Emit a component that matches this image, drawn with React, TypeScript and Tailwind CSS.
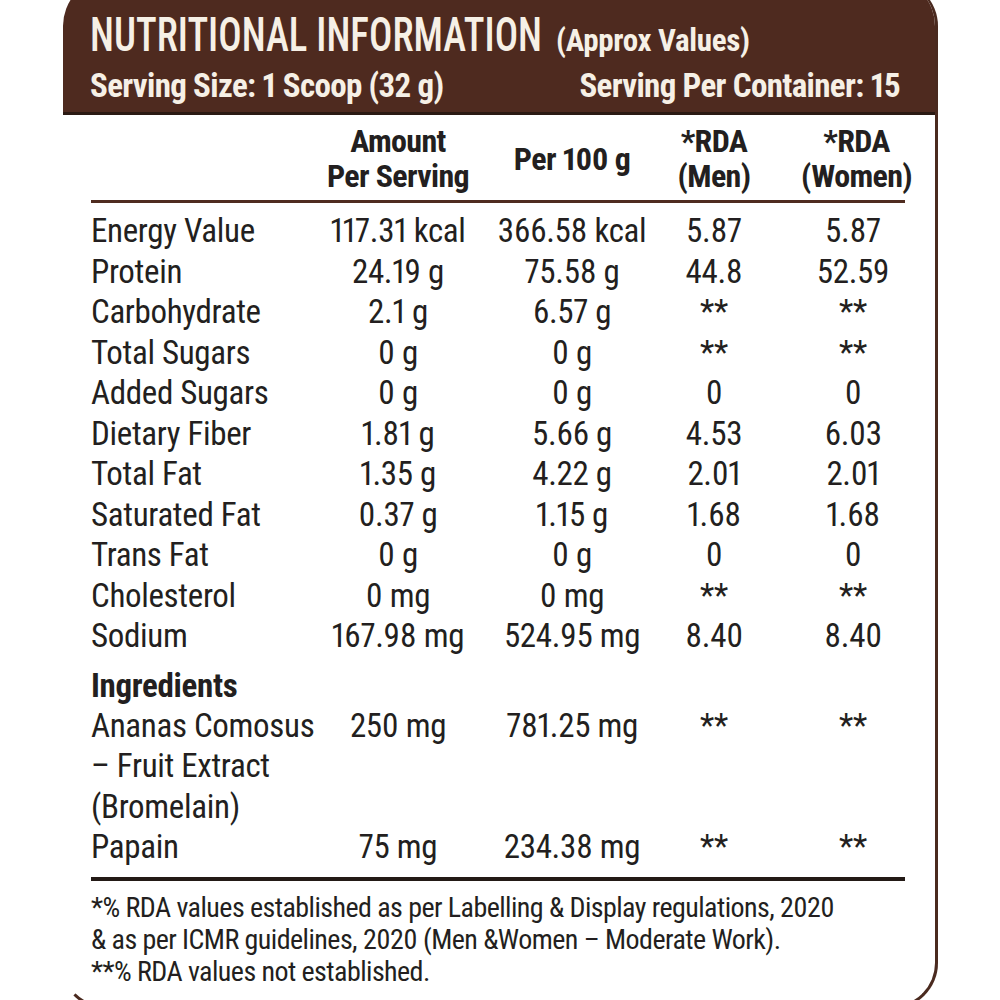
const rows: [string, string, string, string, string][] = [
  ["Energy Value", "117.31 kcal", "366.58 kcal", "5.87", "5.87"],
  ["Protein", "24.19 g", "75.58 g", "44.8", "52.59"],
  ["Carbohydrate", "2.1 g", "6.57 g", "**", "**"],
  ["Total Sugars", "0 g", "0 g", "**", "**"],
  ["Added Sugars", "0 g", "0 g", "0", "0"],
  ["Dietary Fiber", "1.81 g", "5.66 g", "4.53", "6.03"],
  ["Total Fat", "1.35 g", "4.22 g", "2.01", "2.01"],
  ["Saturated Fat", "0.37 g", "1.15 g", "1.68", "1.68"],
  ["Trans Fat", "0 g", "0 g", "0", "0"],
  ["Cholesterol", "0 mg", "0 mg", "**", "**"],
  ["Sodium", "167.98 mg", "524.95 mg", "8.40", "8.40"],
];

function Row({ cells, lines }: { cells: string[]; lines?: string[] }) {
  return (
    <div className="grid grid-cols-[240px_134px_214px_70px_52px_1fr] leading-[40.5px]">
      <div className="whitespace-nowrap">
        {lines ? lines.map((l) => <div key={l}>{l}</div>) : cells[0]}
      </div>
      <div className="flex justify-center whitespace-nowrap">{cells[1]}</div>
      <div className="flex justify-center whitespace-nowrap">{cells[2]}</div>
      <div className="flex justify-center whitespace-nowrap">{cells[3]}</div>
      <div />
      <div className="flex justify-center whitespace-nowrap">{cells[4]}</div>
    </div>
  );
}

export default function App() {
  return (
    <div className="h-[1000px] w-full overflow-hidden bg-white font-['Roboto_Condensed','Liberation_Sans',sans-serif] text-[#231f20] proportional-nums">
      <div className="ml-[60px] mt-[-20px] w-[878px] overflow-hidden rounded-[46px] border-b-[3px] border-l-[3px] border-r-[3px] border-b-[#4a2a1f] border-l-transparent border-r-[#4a2a1f] bg-white">
        {/* Header */}
        <div className="border-b-[3px] border-[#2b1a13] bg-[#4e2a1f] pb-[10px] pl-[27px] pr-[35px] pt-[31px] text-[#f6f0e6]">
          <div className="flex items-baseline">
            <span className="inline-block w-[466px] text-[48px] font-medium leading-none">
              <span className="inline-block origin-left scale-x-[0.81] whitespace-nowrap">NUTRITIONAL INFORMATION</span>
            </span>
            <span className="text-[31px] font-bold leading-none tracking-[-0.01em]">(Approx Values)</span>
          </div>
          <div className="mt-[10px] flex items-baseline justify-between text-[33px] font-bold leading-none tracking-[-0.02em]">
            <span>Serving Size: 1 Scoop (32 g)</span>
            <span>Serving Per Container: 15</span>
          </div>
        </div>

        {/* Body */}
        <div className="pb-[18px] pl-[28px] pr-[30px] text-[33px] tracking-[-0.01em]">
          <div className="grid grid-cols-[240px_134px_214px_70px_52px_1fr] items-center pt-[9px] text-[32px] font-bold leading-[35px] tracking-[-0.02em]">
            <div />
            <div className="flex flex-col items-center whitespace-nowrap">
              <div>Amount</div>
              <div>Per Serving</div>
            </div>
            <div className="flex justify-center whitespace-nowrap">Per 100 g</div>
            <div className="flex flex-col items-center whitespace-nowrap">
              <div>*RDA</div>
              <div>(Men)</div>
            </div>
            <div />
            <div className="flex flex-col items-center whitespace-nowrap">
              <div>*RDA</div>
              <div>(Women)</div>
            </div>
          </div>
          <div className="mt-[6px] h-[3px] bg-[#4f2c20]" />

          <div className="mt-[8px]">
            {rows.map((r) => (
              <Row key={r[0]} cells={r} />
            ))}
          </div>

          <div className="mt-[9px] font-bold leading-[40px]">Ingredients</div>
          <Row
            cells={["", "250 mg", "781.25 mg", "**", "**"]}
            lines={["Ananas Comosus", "– Fruit Extract", "(Bromelain)"]}
          />
          <Row cells={["Papain", "75 mg", "234.38 mg", "**", "**"]} />

          <div className="mt-[9px] h-[4px] bg-[#231a16]" />

          <div className="mt-[11px] text-[28px] leading-[32px] tracking-[-0.02em]">
            <div>*% RDA values established as per Labelling &amp; Display regulations, 2020</div>
            <div>&amp; as per ICMR guidelines, 2020 (Men &amp;Women – Moderate Work).</div>
            <div>**% RDA values not established.</div>
          </div>
        </div>
      </div>
    </div>
  );
}
